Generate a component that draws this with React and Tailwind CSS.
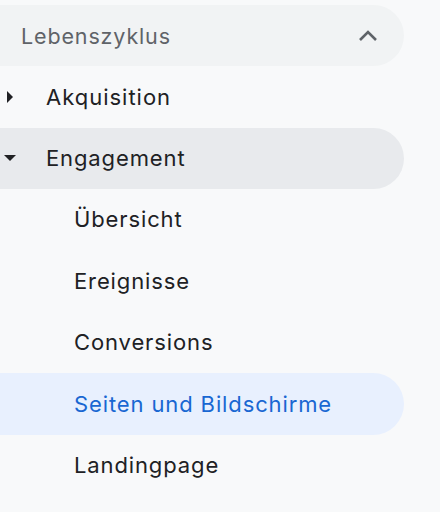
import React from 'react';

const font = { fontFamily: 'Inter, Roboto, "Noto Sans", sans-serif' };

const ChevronUp = () => (
  <svg width="24" height="24" viewBox="0 0 24 24" className="text-[#5f6368]">
    <path d="M4 16 L12 8 L20 16" fill="none" stroke="currentColor" strokeWidth="2.6" />
  </svg>
);

const CaretRight = () => (
  <svg width="12" height="14" viewBox="0 0 12 14">
    <path d="M3 1 L9 7 L3 13 Z" fill="#202124" />
  </svg>
);

const CaretDown = () => (
  <svg width="14" height="12" viewBox="0 0 14 12">
    <path d="M1 3 L13 3 L7 9 Z" fill="#202124" />
  </svg>
);

const subItems = ['Übersicht', 'Ereignisse', 'Conversions', 'Seiten und Bildschirme', 'Landingpage'];

export default function App() {
  return (
    <div className="w-[440px] h-[512px] overflow-hidden bg-[#f8f9fa] pt-[5px]" style={font}>
      {/* Section header */}
      <div className="flex items-center justify-between w-[404px] h-[61.4px] bg-[#f1f3f4] rounded-r-full pl-[21px] pr-[24px]">
        <span className="text-[21.5px] tracking-[0.04em] text-[#5f6368]">Lebenszyklus</span>
        <ChevronUp />
      </div>

      {/* Akquisition */}
      <div className="flex items-center w-[404px] h-[61.4px]">
        <div className="w-[46px] flex items-center pl-[4px]">
          <CaretRight />
        </div>
        <span className="text-[22px] tracking-[0.045em] text-[#202124]">Akquisition</span>
      </div>

      {/* Engagement */}
      <div className="flex items-center w-[404px] h-[61.4px] bg-[#e8eaed] rounded-r-full">
        <div className="w-[46px] flex items-center pl-[3px]">
          <CaretDown />
        </div>
        <span className="text-[22px] tracking-[0.04em] text-[#202124]">Engagement</span>
      </div>

      {subItems.map((item) => {
        const active = item === 'Seiten und Bildschirme';
        return (
          <div
            key={item}
            className={
              active
                ? 'flex items-center w-[404px] h-[61.4px] pl-[74px] bg-[#e8f0fe] rounded-r-full'
                : 'flex items-center w-[404px] h-[61.4px] pl-[74px]'
            }
          >
            <span
              className={
                active
                  ? 'text-[22px] tracking-[0.04em] text-[#1967d2]'
                  : 'text-[22px] tracking-[0.04em] text-[#202124]'
              }
            >
              {item}
            </span>
          </div>
        );
      })}
    </div>
  );
}
